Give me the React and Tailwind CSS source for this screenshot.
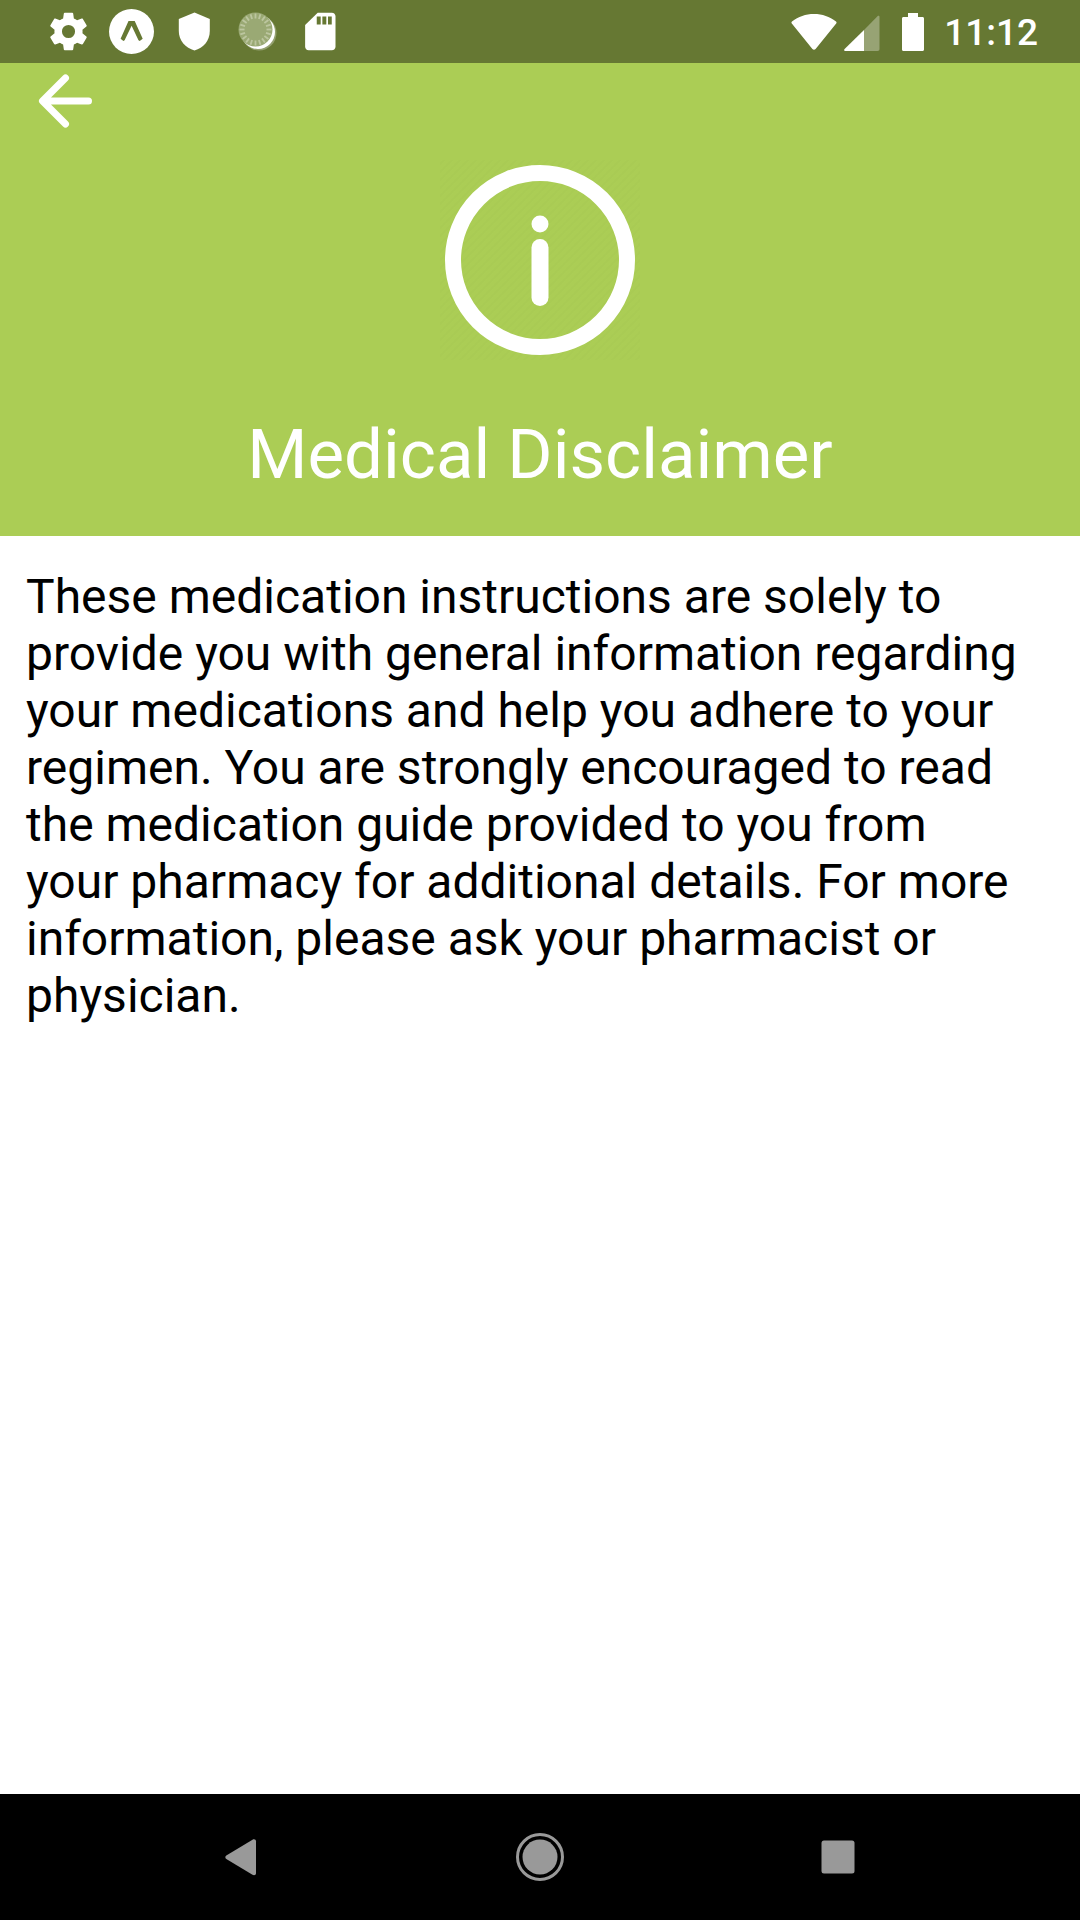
const rays = Array.from({ length: 20 }, (_, i) => i * 18);

function GearIcon() {
  return (
    <svg viewBox="0 0 24 24" className="size-[45px]" fill="currentColor" aria-hidden="true">
      <path d="M19.43 12.98c.04-.32.07-.64.07-.98s-.03-.66-.07-.98l2.11-1.65c.19-.15.24-.42.12-.64l-2-3.46c-.12-.22-.39-.3-.61-.22l-2.49 1c-.52-.4-1.08-.73-1.69-.98l-.38-2.65C14.46 2.18 14.25 2 14 2h-4c-.25 0-.46.18-.49.42l-.38 2.65c-.61.25-1.17.59-1.69.98l-2.49-1c-.23-.09-.49 0-.61.22l-2 3.46c-.13.22-.07.49.12.64l2.11 1.65c-.04.32-.07.65-.07.98s.03.66.07.98l-2.11 1.65c-.19.15-.24.42-.12.64l2 3.46c.12.22.39.3.61.22l2.49-1c.52.4 1.08.73 1.69.98l.38 2.65c.03.24.24.42.49.42h4c.25 0 .46-.18.49-.42l.38-2.65c.61-.25 1.17-.59 1.69-.98l2.49 1c.23.09.49 0 .61-.22l2-3.46c.12-.22.07-.49-.12-.64l-2.11-1.65zM12 15.500a3.500 3.500 0 1 1 0-7 3.500 3.500 0 0 1 0 7z" />
    </svg>
  );
}

function ExpoIcon() {
  return (
    <svg viewBox="0 0 45 45" className="size-[45px]" aria-hidden="true">
      <circle cx="22.500" cy="22.500" r="22.500" fill="white" />
      <path
        d="M19.500 12h6.200l8 17.800-3 2.200-1.200-.8-6.900-14.500-7 14.500-1.200.8-2.800-2.200z"
        fill="#667833"
      />
    </svg>
  );
}

function ShieldIcon() {
  return (
    <svg viewBox="0 0 45 45" className="size-[45px]" fill="currentColor" aria-hidden="true">
      <path d="M22.500 3.600 37.800 10v12c0 9.500-6.400 17-15.300 19.500C13.500 39 6.800 31.500 6.800 22V10z" />
    </svg>
  );
}

function SyncBadgeIcon() {
  return (
    <svg viewBox="0 0 45 45" className="size-[45px]" aria-hidden="true">
      <circle cx="24" cy="24" r="17.500" fill="white" opacity="0.3" />
      <circle cx="23" cy="23" r="17" fill="white" />
      <circle cx="20.500" cy="20.500" r="17" fill="#9aa974" />
      <g stroke="#bcc69f" strokeWidth="1.800">
        {rays.map((angle) => (
          <line key={angle} x1="20.500" y1="4.500" x2="20.500" y2="9.500" transform={`rotate(${angle} 20.500 20.500)`} />
        ))}
      </g>
    </svg>
  );
}

function SdCardIcon() {
  return (
    <svg viewBox="0 0 24 24" className="size-[45px]" aria-hidden="true">
      <path
        d="M18 2h-7.500L3.800 8.500V20c0 1.200.8 2 1.900 2H18c1.200 0 2-.8 2-2V4c0-1.200-.8-2-2-2z"
        fill="white"
      />
      <path d="M10 4h2.100v4.200H10zM13 4h2.100v4.200H13zM16 4h2v4.200h-2z" fill="#667833" />
    </svg>
  );
}

function WifiIcon() {
  return (
    <svg viewBox="0 0 46 38" className="h-[38px] w-[46px]" fill="currentColor" aria-hidden="true">
      <path d="M1 8.500C7.500 3.500 14.500 1 23 1s15.500 2.500 22 7.500c.7.600.7 1.400.2 2L24.600 36c-.9 1.100-2.300 1.100-3.200 0L.8 10.500c-.5-.600-.5-1.400.2-2z" />
    </svg>
  );
}

function SignalIcon() {
  return (
    <svg viewBox="0 0 36 36" className="size-9" fill="currentColor" aria-hidden="true">
      <path d="M20 15v21H1.500C.2 36-.3 34.800.6 33.900z" />
      <path d="M20 15 33.500 1.200c.9-.9 2-.5 2 .8V34c0 1.300-.6 2-2 2H20z" opacity="0.320" />
    </svg>
  );
}

function BatteryIcon() {
  return (
    <svg viewBox="0 0 22 38" className="h-[38px] w-[22px]" fill="currentColor" aria-hidden="true">
      <path d="M6 0h10v4h4.500c.9 0 1.500.6 1.500 1.500v31c0 .9-.6 1.500-1.500 1.500h-19C.6 38 0 37.400 0 36.500v-31C0 4.600.6 4 1.500 4H6z" />
    </svg>
  );
}

function InfoIcon() {
  return (
    <svg viewBox="0 0 200 200" className="size-[200px]" aria-hidden="true">
      <defs>
        <pattern id="weave" width="8" height="8" patternUnits="userSpaceOnUse">
          <path d="M-2 6 6-2M2 10l8-8" stroke="#a5c852" strokeWidth="2" opacity="0.4" />
        </pattern>
      </defs>
      <rect width="200" height="200" fill="url(#weave)" />
      <circle cx="100" cy="100" r="87" fill="none" stroke="white" strokeWidth="16" />
      <circle cx="100" cy="64" r="8.500" fill="white" />
      <rect x="91.500" y="79" width="17" height="67" rx="8.500" fill="white" />
    </svg>
  );
}

function StatusBar() {
  return (
    <div className="flex h-[63px] items-center justify-between bg-[#667833] pr-[42px] pl-[46px] text-white">
      <div className="flex items-center gap-[18px]">
        <GearIcon />
        <ExpoIcon />
        <ShieldIcon />
        <SyncBadgeIcon />
        <SdCardIcon />
      </div>
      <div className="flex items-center">
        <WifiIcon />
        <div className="ml-[7px] pt-[2px]">
          <SignalIcon />
        </div>
        <div className="ml-[22px]">
          <BatteryIcon />
        </div>
        <time className="ml-5 pt-[2px] text-[37px] leading-[40px] font-medium">11:12</time>
      </div>
    </div>
  );
}

function Header() {
  return (
    <header className="flex flex-col bg-[#abcd55] pb-[41px] text-white">
      <button type="button" aria-label="Back" className="mt-2 ml-9 size-[60px] self-start">
        <svg viewBox="0 0 60 60" fill="none" stroke="currentColor" strokeWidth="7" strokeLinecap="round" strokeLinejoin="round" aria-hidden="true">
          <path d="M52.500 30H7M29.500 7 6.500 30l23 23" />
        </svg>
      </button>
      <div className="mt-[29px] flex justify-center">
        <InfoIcon />
      </div>
      <h1 className="mt-[55px] text-center text-[69px] leading-[80px] font-normal">Medical Disclaimer</h1>
    </header>
  );
}

function NavBar() {
  return (
    <nav className="grid h-[126px] grid-cols-3 items-center bg-black px-[92px] text-[#999999]">
      <button type="button" aria-label="Back" className="mx-auto">
        <svg viewBox="0 0 48 48" className="size-12" fill="currentColor" aria-hidden="true">
          <path d="M9.300 22.400 35.500 6.800c1.700-1 3.500-.2 3.500 1.500v32c0 1.700-1.800 2.500-3.500 1.500L9.300 25.900c-1.300-.8-1.300-2.700 0-3.500z" />
        </svg>
      </button>
      <button type="button" aria-label="Home" className="mx-auto">
        <svg viewBox="0 0 48 48" className="size-12" aria-hidden="true">
          <circle cx="24" cy="24" r="22.500" fill="none" stroke="currentColor" strokeWidth="3" />
          <circle cx="24" cy="24" r="17.500" fill="currentColor" />
        </svg>
      </button>
      <button type="button" aria-label="Recent apps" className="mx-auto">
        <svg viewBox="0 0 48 48" className="size-12" fill="currentColor" aria-hidden="true">
          <rect x="6.500" y="7.500" width="33" height="33" rx="2.500" />
        </svg>
      </button>
    </nav>
  );
}

export default function App() {
  return (
    <div className="flex min-h-screen flex-col bg-white font-['Roboto',sans-serif]">
      <StatusBar />
      <Header />
      <main className="flex-1 pt-8 pr-14 pl-[26px]">
        <p className="text-[48px] leading-[57px] text-black">
          These medication instructions are solely to provide you with general information regarding your
          medications and help you adhere to your regimen. You are strongly encouraged to read the medication
          guide provided to you from your pharmacy for additional details. For more information, please ask your
          pharmacist or physician.
        </p>
      </main>
      <NavBar />
    </div>
  );
}
